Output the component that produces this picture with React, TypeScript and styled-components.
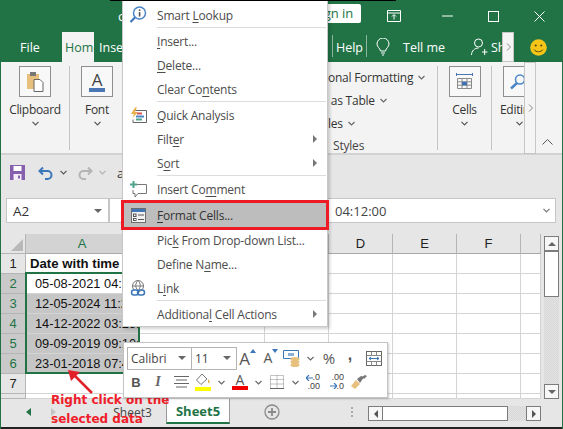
import React from "react";
import styled, { createGlobalStyle } from "styled-components";

const Global = createGlobalStyle`
  html, body { margin: 0; padding: 0; background: #217346; }
  body { width: 563px; height: 429px; overflow: hidden; font-family: "Open Sans", "Noto Sans", sans-serif; }
  * { box-sizing: border-box; }
  u { text-underline-offset: 2px; text-decoration-thickness: 1px; }
`;

const Page = styled.div`
  position: relative; width: 563px; height: 429px; overflow: hidden;
  display: flex; flex-direction: column; background: #217346;
  border-left: 1px solid #217346; border-right: 1px solid #217346;
`;
const TopEdge = styled.div`
  position: absolute; top: 0; left: 109px; width: 286px; height: 1px; background: #000;
`;
const BottomEdge = styled.div`
  height: 2px; background: #222; flex: none;
`;
const TitleRow = styled.div`
  height: 32px; flex: none; display: flex; align-items: center; color: #fff; font-size: 14px; position: relative;
`;
const TitleLetter = styled.span`
  width: 326px; padding-left: 117px; font-size: 13px;
`;
const SignIn = styled.div`
  width: 42px; height: 19px; margin-top: -5px; background: #fff; color: #217346; font-size: 13px; line-height: 19px;
  border-radius: 0 2px 2px 0; white-space: nowrap;
`;
const WinButton = styled.div<{ $w: number; $gap: number }>`
  width: ${p => p.$w}px; height: 24px; display: flex; align-items: center; justify-content: center; flex: none;
  margin-left: ${p => p.$gap}px;
`;
const TabRow = styled.div`
  height: 30px; flex: none; display: flex; align-items: stretch; color: #fff; font-size: 12.5px;
`;
const FileTab = styled.div`
  width: 61px; padding-right: 3px; display: flex; align-items: center; justify-content: center;
`;
const HomeTab = styled.div`
  width: 32px; background: #f3f3f3; color: #217346; display: flex; align-items: center; padding-left: 3px; overflow: hidden; white-space: nowrap;
`;
const InsertTab = styled.div`
  width: 238px; padding-left: 5px; display: flex; align-items: center;
`;
const TabSep = styled.div`
  width: 1px; height: 22px; margin-top: 3px; background: #8fb8a2; flex: none;
`;
const HelpTab = styled.div`
  width: 33px; display: flex; align-items: center; justify-content: center;
`;
const BulbSlot = styled.div`
  width: 26px; display: flex; align-items: center; justify-content: flex-end; padding-right: 3px;
`;
const TellMe = styled.div`
  width: 77px; padding-left: 10px; display: flex; align-items: center; white-space: nowrap;
`;
const PersonSlot = styled.div`
  width: 19px; display: flex; align-items: center; justify-content: center;
`;
const ShareClip = styled.div`
  width: 13px; padding-left: 2px; display: flex; align-items: center; overflow: hidden;
`;
const ScrollStub = styled.div`
  width: 12px; background: #f5f5f5; border: 1px solid #c6c6c6; display: flex; align-items: center; justify-content: center;
  color: #777; flex: none;
`;
const SmileySlot = styled.div`
  flex: 1; display: flex; align-items: center; justify-content: center;
`;

const Ribbon = styled.div`
  height: 93px; flex: none; background: #f3f3f3; border-bottom: 2px solid #d2d2d2; display: flex; position: relative; color: #333;
`;
const Group = styled.div<{ $w: number; $sep?: boolean }>`
  width: ${p => p.$w}px; flex: none; height: 84px; margin-top: 4px;
  display: flex; flex-direction: column; align-items: center;
  border-right: ${p => (p.$sep ? "1px solid #c4c4c4" : "0")};
`;
const IconBox = styled.div`
  width: 32px; height: 31px; flex: none; background: #f8f8f8; border: 1px solid #8f8f8f; display: flex; align-items: center; justify-content: center; position: relative;
`;
const GroupLabel = styled.div`
  font-size: 12px; letter-spacing: -.3px; line-height: 18px; margin-top: 4px; white-space: nowrap; color: #333;
`;
const GroupChevron = styled.div`
  margin-top: 2px; height: 8px; display: flex; justify-content: center;
`;
const FontA = styled.span`
  font-family: "Open Sans", sans-serif; font-size: 17px; font-weight: 500; line-height: 17px; color: #444; border-bottom: 4px solid #4a76b4; padding: 0 3px; display: block;
`;
const StylesGroup = styled.div`
  width: 110px; flex: none; height: 84px; margin-top: 4px; display: flex; flex-direction: column; border-right: 1px solid #c4c4c4; font-size: 12px; letter-spacing: -.25px; color: #333;
`;
const StyleLine = styled.div`
  height: 23px; flex: none; display: flex; align-items: center; gap: 5px; white-space: nowrap;
`;
const StylesLabel = styled.div`
  flex: none; font-size: 12px; letter-spacing: -.2px; margin-top: 2px; padding-left: 5px; line-height: 18px; color: #444;
`;
const CollapseCaret = styled.div`
  position: absolute; right: 9px; bottom: 3px;
`;
const EditColumn = styled.div`
  width: 32px; flex: none; height: 84px; margin-top: 4px; display: flex; flex-direction: column; align-items: flex-start; padding-left: 8px;
  overflow: hidden;
`;
const EditBox = styled(IconBox)`
  margin-left: 3px;
`;
const EditLabel = styled(GroupLabel)`
  width: 24px; overflow: hidden;
`;
const EditChevron = styled(GroupChevron)`
  width: 38px; flex: none;
`;
const RibbonStub = styled(ScrollStub)`
  height: 92px; flex: none;
`;

const Qat = styled.div`
  height: 40px; flex: none; background: #e6e6e6; display: flex; align-items: center; padding: 0 0 5px 9px; color: #333;
`;
const QatIcon = styled.div<{ $w: number }>`
  width: ${p => p.$w}px; flex: none; display: flex; align-items: center; gap: 6px;
`;
const QatText = styled.span`
  font-size: 13px; color: #333;
`;
const FormulaBar = styled.div`
  height: 39px; flex: none; background: #e6e6e6; padding: 3px 6px 0 5px; display: flex; align-items: flex-start;
`;
const NameBox = styled.div`
  width: 103px; height: 25px; background: #fff; border: 1px solid #c6c6c6; font-size: 13.5px; color: #333; display: flex; align-items: center; justify-content: space-between; padding: 0 6px; flex: none;
`;
const FormulaInput = styled.div`
  flex: 1; height: 25px; background: #fff; border: 1px solid #c6c6c6; font-size: 13px; color: #444; display: flex; align-items: center; justify-content: space-between; padding: 0 5px 0 225px;
`;

const Sheet = styled.div`
  height: 165px; flex: none; background: #e6e6e6; display: flex; overflow: hidden;
`;
const GridArea = styled.div`
  width: 540px; flex: none; display: grid;
  grid-template-columns: 25px 113px 126px 64px 64px 64px 64px 20px;
  grid-template-rows: 20px repeat(7, 20px) 5px;
  border-right: 1px solid #b0b0b0;
  position: relative;
`;
const Corner = styled.div`
  background: #e6e6e6; border-right: 1px solid #b5b5b5; border-bottom: 1px solid #b5b5b5; display: flex; align-items: flex-end; justify-content: flex-end; padding: 0 2px 2px 0;
`;
const ColHead = styled.div<{ $on?: boolean }>`
  background: ${p => (p.$on ? "#d3d3d3" : "#e6e6e6")}; color: ${p => (p.$on ? "#217346" : "#222")};
  border-right: 1px solid #b5b5b5; border-bottom: 1px solid #a9a9a9;
  font-family: "Liberation Sans", sans-serif; font-size: 13px; display: flex; align-items: center; justify-content: center;
`;
const RowHead = styled.div<{ $on?: boolean }>`
  background: ${p => (p.$on ? "#c9c9c9" : "#e6e6e6")}; color: ${p => (p.$on ? "#217346" : "#222")};
  border-right: 1px solid #b5b5b5; border-bottom: 1px solid #b5b5b5;
  font-family: "Liberation Sans", sans-serif; font-size: 13px; display: flex; align-items: center; justify-content: center;
`;
const Cell = styled.div<{ $sel?: boolean; $bold?: boolean; $pad?: number }>`
  background: ${p => (p.$sel ? "#c6c6c6" : "#fff")}; border-right: 1px solid #d4d4d4; border-bottom: 1px solid #d4d4d4;
  font-family: "Liberation Sans", sans-serif; font-size: ${p => (p.$bold ? 13.2 : 12.8)}px; font-weight: ${p => (p.$bold ? 700 : 400)};
  color: #111; white-space: nowrap; overflow: hidden; display: flex; align-items: center; padding-left: ${p => p.$pad ?? 0}px;
`;
const Selection = styled.div`
  position: absolute; left: 24px; top: 38px; width: 115px; height: 102px; border: 2px solid #217346; pointer-events: none;
`;
const VScroll = styled.div`
  width: 22px; flex: none; padding: 2px 4px 0 3px; display: flex; flex-direction: column;
`;
const ScrollBtn = styled.div`
  width: 15px; height: 15px; flex: none; background: #f7f7f7; border: 1px solid #7c7c7c; display: flex; align-items: center; justify-content: center;
`;
const VThumb = styled.div`
  height: 46px; flex: none; background: #fff; border: 1px solid #7c7c7c;
`;
const Dither = styled.div`
  flex: 1; background: repeating-conic-gradient(#d6d6d6 0 25%, #e4e4e4 0 50%) 0 0 / 2px 2px;
`;

const TabBar = styled.div`
  height: 28px; flex: none; background: #e6e6e6; display: flex; align-items: flex-start; color: #444;
`;
const NavSlot = styled.div`
  width: 101px; height: 26px; padding: 0 0 0 25px; display: flex; align-items: center; gap: 20px; flex: none;
`;
const InactiveSheet = styled.div`
  width: 64px; height: 26px; flex: none; display: flex; align-items: center; justify-content: center; font-size: 12px; color: #444;
  padding-right: 3px;
`;
const ActiveSheet = styled.div`
  width: 64px; height: 25px; flex: none; background: #fff; color: #217346; font-weight: 700; font-size: 13px; border-bottom: 2px solid #217346; border-right: 1px solid #999; border-left: 1px solid #999;
  display: flex; align-items: center; justify-content: center;
`;
const PlusSlot = styled.div`
  width: 84px; height: 26px; flex: none; display: flex; align-items: center; justify-content: center;
`;
const Dots = styled.div`
  width: 16px; margin-left: 30px; flex: none; height: 26px; display: flex; flex-direction: column; align-items: center; justify-content: center; gap: 2px;
`;
const Dot = styled.i`
  width: 2px; height: 2px; background: #aaa; display: block;
`;
const HScroll = styled.div`
  width: 173px; flex: none; margin-top: 7px; margin-left: 8px; height: 15px; display: flex;
`;
const HThumb = styled.div`
  width: 125px; background: #fff; border: 1px solid #7c7c7c; border-left: 0;
`;

const Menu = styled.div`
  position: absolute; left: 121px; top: 0; width: 206px; height: 327px; background: #fff; border: 1px solid #c8c8c8; border-top: 0;
  padding-top: 3px; color: #484848; font-size: 12px; letter-spacing: -.2px; box-shadow: 2px 2px 3px rgba(0,0,0,.18);
  display: flex; flex-direction: column;
`;
const MenuItem = styled.div<{ $hot?: boolean }>`
  height: ${p => (p.$hot ? 26 : 24)}px; flex: none; display: flex; align-items: center; position: relative; white-space: nowrap;
  margin-top: ${p => (p.$hot ? 1 : 0)}px;
  background: ${p => (p.$hot ? "#bdbdbd" : "transparent")};
  color: ${p => (p.$hot ? "#333" : "#4c4c4c")};
  outline: ${p => (p.$hot ? "3px solid #ed1c24" : "0")};
  outline-offset: -1px;
  z-index: ${p => (p.$hot ? 2 : 0)};
`;
const MenuIcon = styled.div`
  width: 34px; padding-right: 4px; flex: none; display: flex; align-items: center; justify-content: center;
`;
const MenuLabel = styled.span`
  flex: 1;
`;
const MenuArrow = styled.span`
  width: 0; height: 0; margin-right: 10px; border-left: 4px solid #777; border-top: 4px solid transparent; border-bottom: 4px solid transparent;
`;
const MenuSep = styled.div`
  height: 1px; margin: 0 1px 1px 34px; background: #dcdcdc; flex: none;
`;

const Mini = styled.div`
  position: absolute; left: 122px; top: 342px; width: 265px; height: 56px; background: #fff; border: 1px solid #c4c4c4;
  box-shadow: 1px 1px 2px rgba(0,0,0,.2); padding: 3px 3px 0 3px; display: flex; flex-direction: column;
`;
const MiniRow = styled.div`
  display: flex; align-items: center; height: 24px; flex: none;
`;
const Combo = styled.div<{ $w: number }>`
  width: ${p => p.$w}px; height: 23px; flex: none; border: 1px solid #b4b4b4; display: flex; align-items: center; justify-content: space-between; padding: 0 5px 0 3px; font-size: 12px; color: #444; margin-right: -1px;
`;
const MiniCell = styled.div<{ $w: number }>`
  width: ${p => p.$w}px; flex: none; display: flex; align-items: center; justify-content: center; color: #555;
`;
const Bold = styled.span`
  font-family: "Liberation Sans", sans-serif; font-weight: 700; font-size: 13px; color: #555;
`;
const Italic = styled.span`
  font-family: "Liberation Serif", serif; font-style: italic; font-weight: 700; font-size: 14px; color: #666;
`;
const Glyph = styled.span<{ $size: number }>`
  font-family: "Open Sans", sans-serif; font-size: ${p => p.$size}px; line-height: 1; color: #555;
`;
const Percent = styled.span`
  font-family: "Open Sans", sans-serif; font-size: 15px; color: #555;
`;
const Comma = styled.span`
  font-family: "Liberation Sans", sans-serif; font-weight: 700; font-size: 16px; color: #555; margin-top: -6px;
`;
const ColorA = styled.span<{ $c: string }>`
  font-family: "Open Sans", sans-serif; font-size: 14px; line-height: 12px; color: #555; border-bottom: 4px solid ${p => p.$c}; width: 16px; text-align: center; display: block;
`;
const DecStack = styled.span`
  font-family: "Liberation Sans", sans-serif; font-size: 9px; line-height: 9px; color: #444; display: flex; flex-direction: column; align-items: flex-end; width: 14px; margin-left: -7px;
`;
const Annotation = styled.div`
  position: absolute; left: 50px; top: 391px; font-family: "DejaVu Sans", sans-serif; font-weight: 700; font-size: 12px; line-height: 19px; color: #f0202a; white-space: nowrap;
`;
const ArrowWrap = styled.svg`
  position: absolute; left: 65px; top: 368px;
`;

const Chevron = ({ c = "#555" }: { c?: string }) => (
  <svg width="7" height="5" viewBox="0 0 7 5"><path d="M.5 .8 3.5 3.8 6.5 .8" fill="none" stroke={c} strokeWidth="1.2" /></svg>
);
const DownTri = ({ c = "#666" }: { c?: string }) => (
  <svg width="8" height="4" viewBox="0 0 8 4"><path d="M0 0h8L4 4z" fill={c} /></svg>
);
const SmallChevron = () => (
  <svg width="7" height="5" viewBox="0 0 7 5"><path d="M.5 1 3.5 4 6.5 1" fill="none" stroke="#666" strokeWidth="1.1" /></svg>
);

export default function App() {
  const rows = [
    "05-08-2021 04:12:00",
    "12-05-2024 11:25:00",
    "14-12-2022 03:25:00",
    "09-09-2019 09:10:00",
    "23-01-2018 07:45:00",
  ];
  return (
    <Page>
      <Global />
      <TitleRow>
        <TitleLetter>c</TitleLetter>
        <SignIn>ign in</SignIn>
        <WinButton $w={32} $gap={17}>
          <svg width="14" height="12" viewBox="0 0 14 12"><path d="M.5 .5h13v11H.5zM.5 3h13M7 9.500V5M5 6.500 7 4.500 9 6.500" fill="none" stroke="#fff" /></svg>
        </WinButton>
        <WinButton $w={46} $gap={14}>
          <svg width="11" height="2" viewBox="0 0 11 2"><path d="M0 1h11" stroke="#fff" /></svg>
        </WinButton>
        <WinButton $w={46} $gap={0}>
          <svg width="11" height="11" viewBox="0 0 11 11"><rect x=".5" y=".5" width="10" height="10" fill="none" stroke="#fff" /></svg>
        </WinButton>
        <WinButton $w={46} $gap={0}>
          <svg width="11" height="11" viewBox="0 0 11 11"><path d="M.5 .5 10.500 10.500M10.500 .5 .5 10.500" stroke="#fff" /></svg>
        </WinButton>
      </TitleRow>

      <TabRow>
        <FileTab>File</FileTab>
        <HomeTab>Home</HomeTab>
        <InsertTab>Insert</InsertTab>
        <TabSep />
        <HelpTab>Help</HelpTab>
        <TabSep />
        <BulbSlot>
          <svg width="14" height="18" viewBox="0 0 14 18"><path d="M4.500 13C4 10 1 9 1 6a6 6 0 0 1 12 0c0 3-3 4-3.500 7zM5 15h4M6 17h2" fill="none" stroke="#fff" /></svg>
        </BulbSlot>
        <TellMe>Tell me</TellMe>
        <PersonSlot>
          <svg width="17" height="18" viewBox="0 0 17 18" style={{ flex: "none" }}><circle cx="7.500" cy="5" r="4" fill="none" stroke="#fff" /><path d="M.5 17c0-4 3-7 7-7M11 14h5.500M13.700 11v6" fill="none" stroke="#fff" /></svg>
        </PersonSlot>
        <ShareClip>Share</ShareClip>
        <ScrollStub>
          <svg width="5" height="8" viewBox="0 0 5 8"><path d="M1 .5 4.500 4 1 7.500" fill="none" stroke="#888" /></svg>
        </ScrollStub>
        <SmileySlot>
          <svg width="17" height="17" viewBox="0 0 17 17">
            <circle cx="8.500" cy="8.500" r="8.300" fill="#f5c518" />
            <circle cx="5.700" cy="6.500" r="1.100" fill="#5a4a10" /><circle cx="11.300" cy="6.500" r="1.100" fill="#5a4a10" />
            <path d="M4 10.500c2 3 7 3 9 0" fill="none" stroke="#5a4a10" strokeWidth="1" />
          </svg>
        </SmileySlot>
      </TabRow>

      <Ribbon>
        <Group $w={69} $sep>
          <IconBox>
            <svg width="18" height="21" viewBox="0 0 18 21">
              <rect x="1" y="3" width="12" height="15" fill="#e8c07d" />
              <rect x="4" y="1" width="6" height="4" fill="#777" />
              <path d="M8 8.500h6l3 3v9H8z" fill="#fff" stroke="#666" />
            </svg>
          </IconBox>
          <GroupLabel>Clipboard</GroupLabel>
          <GroupChevron><Chevron /></GroupChevron>
        </Group>
        <Group $w={54}>
          <IconBox><FontA>A</FontA></IconBox>
          <GroupLabel>Font</GroupLabel>
          <GroupChevron><Chevron /></GroupChevron>
        </Group>
        <Group $w={204} />
        <StylesGroup>
          <StyleLine>onal Formatting <SmallChevron /></StyleLine>
          <StyleLine>&nbsp;as Table <SmallChevron /></StyleLine>
          <StyleLine>les <SmallChevron /></StyleLine>
          <StylesLabel>Styles</StylesLabel>
        </StylesGroup>
        <Group $w={54} $sep>
          <IconBox>
            <svg width="17" height="19" viewBox="0 0 17 19">
              <path d="M.5 1v3M16.500 1v3M1 2.500h15" stroke="#4a76b4" fill="none" />
              <path d="M1.500 6.500h14v10h-14zM1.500 9.800h14M1.500 13.200h14M6 6.500v10M11 6.500v10" fill="none" stroke="#8a8a8a" />
              <rect x="6" y="9.800" width="5" height="3.500" fill="#3f6fb5" />
            </svg>
          </IconBox>
          <GroupLabel>Cells</GroupLabel>
          <GroupChevron><Chevron /></GroupChevron>
        </Group>
        <EditColumn>
          <EditBox>
            <svg width="18" height="18" viewBox="0 0 18 18" style={{ marginLeft: -2 }}>
              <circle cx="11" cy="6.500" r="4.500" fill="none" stroke="#4a86c8" strokeWidth="1.500" />
              <path d="M8 10 2 15.500" stroke="#4a86c8" strokeWidth="2.500" />
            </svg>
          </EditBox>
          <EditLabel>Editing</EditLabel>
          <EditChevron><Chevron /></EditChevron>
        </EditColumn>
        <RibbonStub>
          <svg width="5" height="8" viewBox="0 0 5 8"><path d="M1 .5 4.500 4 1 7.500" fill="none" stroke="#888" /></svg>
        </RibbonStub>
        <CollapseCaret>
          <svg width="11" height="6" viewBox="0 0 11 6"><path d="M.5 5.500 5.500 .5 10.500 5.500" fill="none" stroke="#555" /></svg>
        </CollapseCaret>
      </Ribbon>

      <Qat>
        <QatIcon $w={28}>
          <svg width="15" height="15" viewBox="0 0 15 15">
            <rect width="15" height="15" fill="#8660ac" />
            <rect x="3.500" y="1" width="8" height="5" fill="#fff" />
            <rect x="3.500" y="9" width="8" height="6" fill="#f3eef7" />
            <rect x="8" y="10.500" width="2" height="3" fill="#8660ac" />
          </svg>
        </QatIcon>
        <QatIcon $w={39}>
          <svg width="16" height="14" viewBox="0 0 16 14"><path d="M5 1.500 1.500 5 5 8.500M2 5h7.500a4 4 0 0 1 0 8H7" fill="none" stroke="#3a76b8" strokeWidth="2" /></svg>
          <Chevron />
        </QatIcon>
        <QatIcon $w={40}>
          <svg width="16" height="14" viewBox="0 0 16 14"><path d="M11 1.500 14.500 5 11 8.500M14 5H6.500a4 4 0 0 0 0 8H9" fill="none" stroke="#b4b4b4" strokeWidth="2" /></svg>
          <Chevron c="#b0b0b0" />
        </QatIcon>
        <QatText>a</QatText>
      </Qat>

      <FormulaBar>
        <NameBox>A2 <DownTri /></NameBox>
        <FormulaInput>04:12:00 <Chevron c="#777" /></FormulaInput>
      </FormulaBar>

      <Sheet>
        <GridArea>
          <Corner>
            <svg width="12" height="12" viewBox="0 0 12 12"><path d="M12 0v12H0z" fill="#b9b9b9" /></svg>
          </Corner>
          {["A", "B", "C", "D", "E", "F"].map(c => <ColHead key={c} $on={c === "A"}>{c}</ColHead>)}
          <ColHead />

          <RowHead>1</RowHead>
          <Cell $bold $pad={4}>Date with time</Cell>
          {[0, 1, 2, 3, 4, 5].map(i => <Cell key={i} />)}

          {rows.map((r, i) => (
            <React.Fragment key={r}>
              <RowHead $on>{i + 2}</RowHead>
              <Cell $sel={i > 0} $pad={9}>{r}</Cell>
              {[0, 1, 2, 3, 4, 5].map(j => <Cell key={j} />)}
            </React.Fragment>
          ))}

          <RowHead>7</RowHead>
          {[0, 1, 2, 3, 4, 5, 6].map(j => <Cell key={j} />)}
          <RowHead />
          {[0, 1, 2, 3, 4, 5, 6].map(j => <Cell key={j} />)}
          <Selection />
        </GridArea>
        <VScroll>
          <ScrollBtn><svg width="8" height="4" viewBox="0 0 8 4"><path d="M4 0l4 4H0z" fill="#666" /></svg></ScrollBtn>
          <VThumb />
          <Dither />
          <ScrollBtn><DownTri /></ScrollBtn>
        </VScroll>
      </Sheet>

      <TabBar>
        <NavSlot>
          <svg width="5" height="8" viewBox="0 0 5 8"><path d="M5 0v8L0 4z" fill="#217346" /></svg>
          <svg width="5" height="8" viewBox="0 0 5 8"><path d="M0 0v8l5-4z" fill="#c4c4c4" /></svg>
        </NavSlot>
        <InactiveSheet>Sheet3</InactiveSheet>
        <ActiveSheet>Sheet5</ActiveSheet>
        <PlusSlot>
          <svg width="16" height="16" viewBox="0 0 16 16"><circle cx="8" cy="8" r="7" fill="none" stroke="#8a8a8a" strokeWidth="1.300" /><path d="M8 4v8M4 8h8" stroke="#8a8a8a" strokeWidth="1.800" /></svg>
        </PlusSlot>
        <Dots><Dot /><Dot /><Dot /></Dots>
        <HScroll>
          <ScrollBtn><svg width="4" height="8" viewBox="0 0 4 8"><path d="M4 0v8L0 4z" fill="#555" /></svg></ScrollBtn>
          <HThumb />
          <Dither />
          <ScrollBtn><svg width="4" height="8" viewBox="0 0 4 8"><path d="M0 0v8l4-4z" fill="#555" /></svg></ScrollBtn>
        </HScroll>
      </TabBar>
      <BottomEdge />

      <Annotation>Right click on the<br />selected data</Annotation>
      <ArrowWrap width="28" height="28" viewBox="0 0 28 28">
        <path d="M26 25 7 6" stroke="#e2202a" strokeWidth="2.500" fill="none" />
        <path d="M2 2l12 2-9 9z" fill="#e2202a" />
      </ArrowWrap>

      <Menu>
        <MenuItem>
          <MenuIcon>
            <svg width="18" height="18" viewBox="0 0 18 18">
              <circle cx="10.500" cy="7" r="6" fill="#fff" stroke="#4a86c8" strokeWidth="1.500" />
              <path d="M6 11.500 1.500 16" stroke="#3a76b8" strokeWidth="2.200" />
              <rect x="9.800" y="6" width="1.600" height="4.500" fill="#555" /><rect x="9.800" y="3.400" width="1.600" height="1.600" fill="#555" />
            </svg>
          </MenuIcon>
          <MenuLabel>Smart <u>L</u>ookup</MenuLabel>
        </MenuItem>
        <MenuSep />
        <MenuItem><MenuIcon /><MenuLabel><u>I</u>nsert...</MenuLabel></MenuItem>
        <MenuItem><MenuIcon /><MenuLabel><u>D</u>elete...</MenuLabel></MenuItem>
        <MenuItem><MenuIcon /><MenuLabel>Clear Co<u>n</u>tents</MenuLabel></MenuItem>
        <MenuSep />
        <MenuItem>
          <MenuIcon>
            <svg width="17" height="16" viewBox="0 0 17 16">
              <path d="M5 .5 1 7h3L2.500 11 8 5H5L7 .5z" fill="#eab04a" />
              <path d="M5.500 3.500h11v12H3v-3" fill="none" stroke="#666" />
              <rect x="7" y="5.500" width="5" height="2" fill="#d9534f" /><rect x="6" y="8.500" width="8" height="2" fill="#4a86c8" /><rect x="6" y="11.500" width="6" height="2" fill="#4fa38a" />
            </svg>
          </MenuIcon>
          <MenuLabel><u>Q</u>uick Analysis</MenuLabel>
        </MenuItem>
        <MenuItem><MenuIcon /><MenuLabel>Filt<u>e</u>r</MenuLabel><MenuArrow /></MenuItem>
        <MenuItem><MenuIcon /><MenuLabel>S<u>o</u>rt</MenuLabel><MenuArrow /></MenuItem>
        <MenuSep />
        <MenuItem>
          <MenuIcon>
            <svg width="17" height="17" viewBox="0 0 17 17">
              <path d="M6.500 3.500h10v9H8l-3 3.500v-3.500H3V9" fill="none" stroke="#777" />
              <path d="M3.500 0v7M0 3.500h7" stroke="#4fa38a" strokeWidth="2" />
            </svg>
          </MenuIcon>
          <MenuLabel>Insert Co<u>m</u>ment</MenuLabel>
        </MenuItem>
        <MenuItem $hot>
          <MenuIcon>
            <svg width="15" height="15" viewBox="0 0 15 15">
              <rect x=".5" y=".5" width="14" height="14" fill="#f2f2f2" stroke="#6d6d6d" />
              <rect x="1" y="1" width="13" height="3" fill="#3f76b8" />
              <rect x="2.500" y="6" width="2.500" height="2.500" fill="none" stroke="#555" />
              <rect x="2.500" y="10.500" width="2.500" height="2" fill="none" stroke="#555" />
              <path d="M7 7h6M7 11.500h6" stroke="#555" />
            </svg>
          </MenuIcon>
          <MenuLabel><u>F</u>ormat Cells...</MenuLabel>
        </MenuItem>
        <MenuItem><MenuIcon /><MenuLabel>Pic<u>k</u> From Drop-down List...</MenuLabel></MenuItem>
        <MenuItem><MenuIcon /><MenuLabel>Define N<u>a</u>me...</MenuLabel></MenuItem>
        <MenuItem>
          <MenuIcon>
            <svg width="17" height="17" viewBox="0 0 17 17">
              <circle cx="8" cy="6" r="5.500" fill="none" stroke="#777" />
              <path d="M2.500 6h11M8 .5c-3 3-3 7 0 10M8 .5c3 3 3 7 0 10" fill="none" stroke="#777" />
              <rect x="1.500" y="10" width="7" height="5" rx="2.500" fill="#fff" stroke="#3a76b8" strokeWidth="1.500" />
              <rect x="7.500" y="10" width="7" height="5" rx="2.500" fill="none" stroke="#3a76b8" strokeWidth="1.500" />
            </svg>
          </MenuIcon>
          <MenuLabel>L<u>i</u>nk</MenuLabel>
        </MenuItem>
        <MenuSep />
        <MenuItem><MenuIcon /><MenuLabel>Additiona<u>l</u> Cell Actions</MenuLabel><MenuArrow /></MenuItem>
      </Menu>

      <Mini>
        <MiniRow>
          <Combo $w={65}>Calibri <DownTri /></Combo>
          <Combo $w={46}>11 <DownTri /></Combo>
          <MiniCell $w={23}>
            <Glyph $size={17}>A</Glyph>
            <svg width="6" height="4" viewBox="0 0 6 4" style={{ marginTop: -14 }}><path d="M3 0l3 4H0z" fill="#3a76b8" /></svg>
          </MiniCell>
          <MiniCell $w={24}>
            <Glyph $size={14}>A</Glyph>
            <svg width="6" height="4" viewBox="0 0 6 4" style={{ marginTop: -14 }}><path d="M0 0h6L3 4z" fill="#3a76b8" /></svg>
          </MiniCell>
          <MiniCell $w={18}>
            <svg width="18" height="17" viewBox="0 0 18 17" style={{ flex: "none" }}>
              <path d="M.5 .5h15v8H.5z" fill="none" stroke="#3a76b8" />
              <rect x="5" y="3" width="6" height="3" fill="#8ab0d8" />
              <ellipse cx="12" cy="9" rx="4.500" ry="2" fill="#e8c07d" /><ellipse cx="12" cy="12" rx="4.500" ry="2" fill="#e8c07d" /><ellipse cx="12" cy="15" rx="4.500" ry="2" fill="#e8c07d" />
            </svg>
          </MiniCell>
          <MiniCell $w={18}><SmallChevron /></MiniCell>
          <MiniCell $w={20}><Percent>%</Percent></MiniCell>
          <MiniCell $w={22}><Comma>,</Comma></MiniCell>
          <MiniCell $w={26}>
            <svg width="16" height="15" viewBox="0 0 16 15">
              <rect x=".5" y=".5" width="15" height="14" fill="none" stroke="#666" />
              <path d="M.5 4.500h15M.5 10.500h15M5.500 .5v4M10.500 .5v4M5.500 10.500v4M10.500 10.500v4" stroke="#888" />
              <path d="M3 7.500h10M3 7.500l2-1.500M3 7.500l2 1.500M13 7.500l-2-1.500M13 7.500l-2 1.500" stroke="#3a76b8" fill="none" />
            </svg>
          </MiniCell>
        </MiniRow>
        <MiniRow>
          <MiniCell $w={18}><Bold>B</Bold></MiniCell>
          <MiniCell $w={26}><Italic>I</Italic></MiniCell>
          <MiniCell $w={20}>
            <svg width="15" height="12" viewBox="0 0 15 12"><path d="M0 .5h15M2 4h11M0 7.500h15M2 11h11" stroke="#666" /></svg>
          </MiniCell>
          <MiniCell $w={24}>
            <svg width="17" height="18" viewBox="0 0 17 18">
              <path d="M7 1 1.500 7 6 11.500 12 6z" fill="#fff" stroke="#777" />
              <path d="M13 6c1.500 2 2 3 1.500 4s-2 0-1.500-4z" fill="#e0a83a" />
              <rect x="0" y="14" width="16" height="4" fill="#ffff00" />
            </svg>
          </MiniCell>
          <MiniCell $w={12}><SmallChevron /></MiniCell>
          <MiniCell $w={26}><ColorA $c="#f00000">A</ColorA></MiniCell>
          <MiniCell $w={10}><SmallChevron /></MiniCell>
          <MiniCell $w={28}>
            <svg width="14" height="14" viewBox="0 0 14 14"><path d="M.5 .5h13v13H.5zM.5 4.500h13M.5 9h13M7 .5v13" fill="none" stroke="#888" strokeDasharray="1 1" /><path d="M0 13.500h14" stroke="#666" /></svg>
          </MiniCell>
          <MiniCell $w={8}><SmallChevron /></MiniCell>
          <MiniCell $w={28}>
            <svg width="7" height="6" viewBox="0 0 7 6" style={{ marginTop: -8, flex: "none" }}><path d="M3 0 0 3l3 3M0 3h7" fill="none" stroke="#3a76b8" strokeWidth="1.200" /></svg>
            <DecStack><span>.0</span><span>.00</span></DecStack>
          </MiniCell>
          <MiniCell $w={20}>
            <svg width="7" height="6" viewBox="0 0 7 6" style={{ marginTop: 8, flex: "none" }}><path d="M4 0l3 3-3 3M0 3h7" fill="none" stroke="#3a76b8" strokeWidth="1.200" /></svg>
            <DecStack><span>.00</span><span>.0</span></DecStack>
          </MiniCell>
          <MiniCell $w={22}>
            <svg width="17" height="14" viewBox="0 0 17 14">
              <path d="M6 5 1 11l4 3 5-5z" fill="#e8c07d" />
              <path d="M7 4l4-3 3 1-4 6z" fill="#777" />
              <path d="M12 2l3-2 2 1-3 3z" fill="#777" />
            </svg>
          </MiniCell>
        </MiniRow>
      </Mini>
      <TopEdge />
    </Page>
  );
}
